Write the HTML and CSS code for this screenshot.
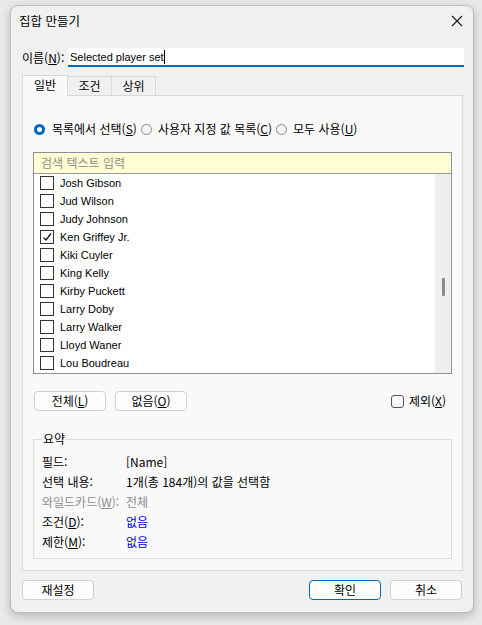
FILE: index.html
```html
<!DOCTYPE html>
<html lang="ko">
<head>
<meta charset="utf-8">
<link rel="stylesheet" href="styles.css">
</head>
<body>
<div class="window">
  <div class="titlebar">
    <span class="title">집합 만들기</span>
    <svg class="close" width="12" height="12" viewBox="0 0 12 12"><path d="M1 1L11 11M11 1L1 11" stroke="#1a1a1a" stroke-width="1.1" fill="none"/></svg>
  </div>
  <div class="content">
    <div class="namerow">
      <span class="namelabel">이름(<u>N</u>):</span>
      <div class="nameinput"><span class="latin">Selected player set</span><span class="caret"></span></div>
    </div>
    <div class="tabs">
      <div class="tab active">일반</div>
      <div class="tab">조건</div>
      <div class="tab">상위</div>
    </div>
    <div class="panel">
      <div class="radios">
        <span class="radio on"></span><span class="rlabel">목록에서 선택(<u>S</u>)</span>
        <span class="radio"></span><span class="rlabel">사용자 지정 값 목록(<u>C</u>)</span>
        <span class="radio"></span><span class="rlabel">모두 사용(<u>U</u>)</span>
      </div>
      <div class="listbox">
        <div class="search">검색 텍스트 입력</div>
        <div class="listbody">
          <div class="items">
            <div class="item"><span class="cb"></span><span class="latin">Josh Gibson</span></div>
            <div class="item"><span class="cb"></span><span class="latin">Jud Wilson</span></div>
            <div class="item"><span class="cb"></span><span class="latin">Judy Johnson</span></div>
            <div class="item"><span class="cb"><svg width="12" height="12" viewBox="0 0 12 12"><path d="M2.5 6.5L5 9L10 2.5" stroke="#111" stroke-width="1.3" fill="none"/></svg></span><span class="latin">Ken Griffey Jr.</span></div>
            <div class="item"><span class="cb"></span><span class="latin">Kiki Cuyler</span></div>
            <div class="item"><span class="cb"></span><span class="latin">King Kelly</span></div>
            <div class="item"><span class="cb"></span><span class="latin">Kirby Puckett</span></div>
            <div class="item"><span class="cb"></span><span class="latin">Larry Doby</span></div>
            <div class="item"><span class="cb"></span><span class="latin">Larry Walker</span></div>
            <div class="item"><span class="cb"></span><span class="latin">Lloyd Waner</span></div>
            <div class="item"><span class="cb"></span><span class="latin">Lou Boudreau</span></div>
          </div>
          <div class="scrollbar"><div class="thumb"></div></div>
        </div>
      </div>
      <div class="btnrow">
        <button class="btn">전체(<u>L</u>)</button>
        <button class="btn">없음(<u>O</u>)</button>
        <span class="spacer"></span>
        <span class="cb2"></span><span class="exlabel">제외(<u>X</u>)</span>
      </div>
      <div class="group">
        <div class="legend">요약</div>
        <div class="srow"><span class="sl">필드:</span><span class="sv">[Name]</span></div>
        <div class="srow"><span class="sl">선택 내용:</span><span class="sv">1개(총 184개)의 값을 선택함</span></div>
        <div class="srow dis"><span class="sl">와일드카드(<u>W</u>):</span><span class="sv">전체</span></div>
        <div class="srow"><span class="sl">조건(<u>D</u>):</span><span class="sv link">없음</span></div>
        <div class="srow"><span class="sl">제한(<u>M</u>):</span><span class="sv link">없음</span></div>
      </div>
    </div>
    <div class="footer">
      <button class="btn">재설정</button>
      <span class="spacer"></span>
      <button class="btn default">확인</button>
      <button class="btn">취소</button>
    </div>
  </div>
</div>
</body>
</html>
```

FILE: styles.css
```css
* { box-sizing: border-box; }
html, body { margin: 0; padding: 0; }
body {
  width: 482px;
  height: 625px;
  overflow: hidden;
  background: #e9e9e9;
  font-family: "Noto Sans CJK KR", "Noto Sans", sans-serif;
  font-size: 12px;
  color: #000;
}
u { text-decoration: underline; text-underline-offset: 1px; }
.latin { font-family: "Liberation Sans", Arial, sans-serif; font-size: 11px; }
.window {
  margin: 5px 0 0 10px;
  width: 464px;
  height: 608px;
  background: #f0f0f0;
  border: 1px solid #bdbdbd;
  border-radius: 8px;
  box-shadow: 0 3px 10px rgba(0,0,0,0.22);
  display: flex;
  flex-direction: column;
}
.titlebar {
  height: 33px;
  display: flex;
  align-items: center;
  padding: 0 8px 3px 8px;
}
.title { flex: 1; font-size: 12.5px; line-height: 16px; }
.close { margin-right: 2px; }
.content { padding: 0 11px; display: flex; flex-direction: column; }
.namerow {
  margin-top: 9px;
  height: 19px;
  display: flex;
  align-items: center;
}
.namelabel { width: 46px; line-height: 16px; }
.nameinput {
  flex: 1;
  height: 19px;
  margin-right: -2px;
  background: #fff;
  border-bottom: 2px solid #0067c0;
  display: flex;
  align-items: center;
  padding-left: 2px;
}
.caret { width: 1px; height: 14px; background: #000; }
.tabs {
  margin-top: 8px;
  display: flex;
  align-items: flex-end;
  height: 21px;
  position: relative;
  z-index: 1;
  margin-bottom: -1px;
}
.tab {
  height: 20px;
  width: 44px;
  border: 1px solid #d9d9d9;
  border-left: none;
  background: #f0f0f0;
  text-align: center;
  line-height: 18px;
}
.tab.active {
  width: 46px;
  height: 21px;
  border-left: 1px solid #d9d9d9;
  border-bottom: none;
  background: #f9f9f9;
}
.panel {
  width: 441px;
  border: 1px solid #d9d9d9;
  background: #f9f9f9;
  padding: 0 10px 11px 10px;
  display: flex;
  flex-direction: column;
}
.radios {
  margin-top: 25px;
  height: 16px;
  display: flex;
  align-items: center;
  padding-left: 1px;
}
.radio {
  width: 11px;
  height: 11px;
  border-radius: 50%;
  border: 1px solid #8a8a8a;
  background: #f5f5f5;
  margin-right: 6px;
}
.radio.on {
  border: 3px solid #0067c0;
  background: #fff;
  margin-right: 7px;
}
.rlabel { margin-right: 4px; line-height: 16px; }
.listbox {
  margin-top: 15px;
  height: 222px;
  border: 1px solid #8b9099;
  display: flex;
  flex-direction: column;
  background: #fff;
}
.search {
  height: 21px;
  flex: none;
  background: #ffffd3;
  border-bottom: 1px solid #9a9a9a;
  color: #8c8c8c;
  padding-left: 7px;
  line-height: 19px;
}
.listbody { flex: 1; display: flex; overflow: hidden; }
.items { flex: 1; }
.item {
  height: 18px;
  display: flex;
  align-items: center;
  padding-left: 6px;
}
.cb {
  width: 14px;
  height: 14px;
  border: 1px solid #333;
  background: #fff;
  margin-right: 6px;
  display: flex;
  align-items: center;
  justify-content: center;
}
.scrollbar {
  width: 16px;
  background: #efefef;
  display: flex;
  justify-content: center;
  padding-top: 104px;
}
.thumb { width: 3px; height: 18px; background: #8a8a8a; border-radius: 1px; }
.btnrow {
  margin-top: 17px;
  height: 20px;
  display: flex;
  align-items: center;
}
.btn {
  font-family: "Noto Sans CJK KR", "Noto Sans", sans-serif;
  font-size: 12px;
  color: #000;
  width: 72px;
  height: 20px;
  padding: 0;
  line-height: 16px;
  background: #fdfdfd;
  border: 1px solid #d0d0d0;
  border-radius: 4px;
  margin-right: 9px;
}
.btnrow .btn:first-child { margin-left: 1px; }
.spacer { flex: 1; }
.cb2 {
  width: 13px;
  height: 13px;
  border: 1px solid #555;
  border-radius: 3px;
  background: #fafafa;
  margin-right: 5px;
}
.exlabel { margin-right: 6px; line-height: 16px; }
.group {
  margin-top: 28px;
  height: 120px;
  border: 1px solid #dcdcdc;
  padding: 0 0 0 8px;
  display: flex;
  flex-direction: column;
}
.legend {
  align-self: flex-start;
  margin-top: -8px;
  background: #f9f9f9;
  padding: 0 1px;
  line-height: 14px;
  height: 14px;
}
.srow {
  height: 20px;
  display: flex;
  align-items: center;
}
.legend + .srow { margin-top: 5px; }
.sl { width: 84px; }
.dis { color: #8c8c8c; }
.link { color: #0000e6; }
.footer {
  margin-top: 9px;
  height: 20px;
  display: flex;
}
.footer .btn:last-child { margin-right: 0; }
.btn.default { border: 1px solid #0067c0; }
```
